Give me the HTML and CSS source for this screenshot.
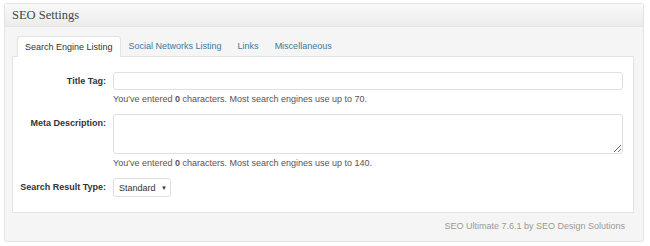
FILE: index.html
```html
<!DOCTYPE html>
<html lang="en">
<head>
    <meta charset="UTF-8">
    <title>SEO Settings</title>
    <link rel="stylesheet" href="styles.css">
</head>
<body>
    <div class="postbox">
        <h3 class="hndle">SEO Settings</h3>
        <div class="inside">
            <ul class="tabs">
                <li class="tab active">Search Engine Listing</li>
                <li class="tab">Social Networks Listing</li>
                <li class="tab">Links</li>
                <li class="tab">Miscellaneous</li>
            </ul>
            <div class="panel">
                <div class="row">
                    <label class="lbl">Title Tag:</label>
                    <div class="field">
                        <input class="text-input" type="text">
                        <p class="help">You've entered <b>0</b> characters. Most search engines use up to 70.</p>
                    </div>
                </div>
                <div class="row">
                    <label class="lbl">Meta Description:</label>
                    <div class="field">
                        <textarea class="text-area"></textarea>
                        <p class="help">You've entered <b>0</b> characters. Most search engines use up to 140.</p>
                    </div>
                </div>
                <div class="row">
                    <label class="lbl">Search Result Type:</label>
                    <div class="field">
                        <div class="select">Standard <span class="arrow">&#9660;</span></div>
                    </div>
                </div>
            </div>
            <p class="credit">SEO Ultimate 7.6.1 by SEO Design Solutions</p>
        </div>
    </div>
</body>
</html>
```

FILE: styles.css
```css
*{
    margin: 0;
    padding: 0;
    box-sizing: border-box;
}
body{
    background-color: #fff;
    padding: 3px 7px 0 4px;
    font-family: "Liberation Sans", Arial, sans-serif;
    font-size: 9px;
    color: #333;
}
.postbox{
    width: 640px;
    height: 239px;
    border: 1px solid #e3e3e3;
    border-radius: 3px;
    background-color: #f5f5f5;
}
.hndle{
    height: 23px;
    padding: 4px 7px 0;
    font-family: "Liberation Serif", Georgia, serif;
    font-weight: normal;
    font-size: 12.5px;
    color: #464646;
    background: linear-gradient(#f9f9f9, #ececec);
    border-bottom: 1px solid #e3e3e3;
}
.inside{
    padding: 9px 9px 0 7px;
}
.tabs{
    list-style: none;
    display: flex;
    padding-left: 5px;
    height: 20px;
}
.tab{
    padding: 5px 8px 0;
    height: 20px;
    color: #3a7aa5;
}
.tab.active{
    padding: 5px 7px 0;
    color: #333;
    background-color: #fff;
    border: 1px solid #e3e3e3;
    border-bottom: none;
    border-radius: 3px 3px 0 0;
    position: relative;
    z-index: 1;
    height: 21px;
}
.panel{
    background-color: #fff;
    border: 1px solid #e3e3e3;
    padding: 15px 10px 14px 0;
    height: 157px;
}
.row{
    display: flex;
    margin-bottom: 8px;
}
.lbl{
    width: 93px;
    text-align: right;
    font-weight: bold;
    padding-top: 4px;
    color: #333;
    flex-shrink: 0;
}
.field{
    margin-left: 7px;
    flex: 1;
}
.text-input{
    display: block;
    width: 100%;
    height: 18px;
    border: 1px solid #dfdfdf;
    border-radius: 3px;
    background: #fff;
}
.text-area{
    display: block;
    width: 100%;
    height: 40px;
    border: 1px solid #dfdfdf;
    border-radius: 3px;
    resize: vertical;
}
.help{
    margin-top: 2px;
    line-height: 14px;
    color: #555;
}
.select{
    display: inline-block;
    width: 58px;
    height: 19px;
    border: 1px solid #dfdfdf;
    border-radius: 3px;
    padding: 4px 0 0 5px;
    color: #333;
}
.arrow{
    font-size: 6px;
    vertical-align: 1px;
    margin-left: 3px;
}
.credit{
    text-align: right;
    color: #999;
    padding: 8px 9px 0 0;
}
```
